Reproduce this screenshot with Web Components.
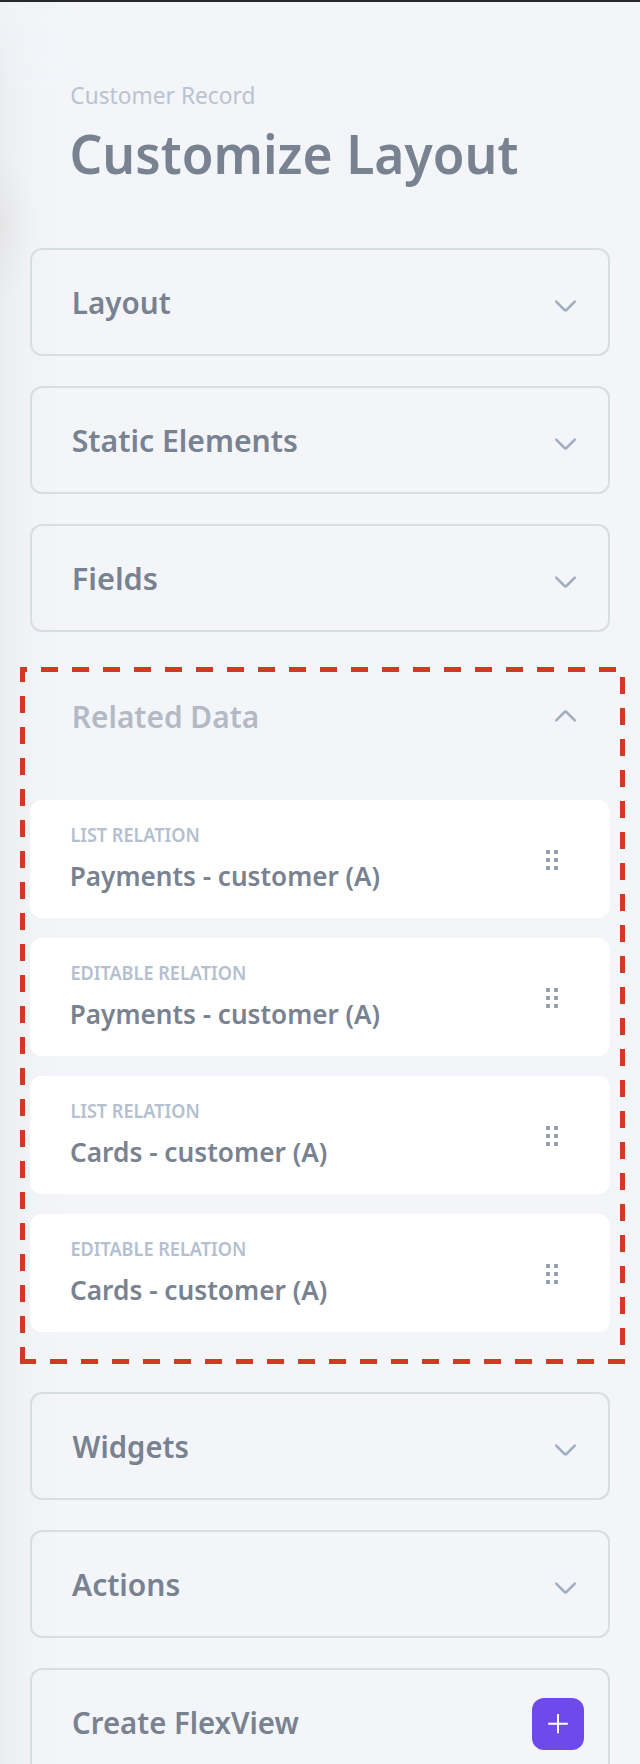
<!DOCTYPE html>
<html lang="en">
<head>
<meta charset="utf-8">
<title>Customize Layout</title>
<style>
html, body { margin: 0; height: 1764px; overflow: hidden; background: #f3f5f9; }
body { font-family: "Noto Sans", "Open Sans", sans-serif; }
</style>
</head>
<body>
<layout-panel>
  <panel-header slot="header">
    <fit-text slot="eyebrow" size="23.8" weight="400" ink="182.5" nudge=".3">Customer Record</fit-text>
    <fit-text slot="title" size="54.6" weight="600" ink="445" nudge=".3">Customize Layout</fit-text>
  </panel-header>
  <accordion-row><fit-text ink="96.5" nudge=".7">Layout</fit-text></accordion-row>
  <accordion-row><fit-text ink="224" nudge="-.3">Static Elements</fit-text></accordion-row>
  <accordion-row><fit-text ink="83" nudge=".7">Fields</fit-text></accordion-row>
  <related-group>
    <accordion-row slot="head" open><fit-text ink="183.5" nudge=".7">Related Data</fit-text></accordion-row>
    <relation-card>
      <fit-text slot="kind" size="19.6" weight="600" ink="127" nudge=".3">LIST RELATION</fit-text>
      <fit-text size="27.4" weight="600" ink="307.5" nudge=".7">Payments - customer (A)</fit-text>
    </relation-card>
    <relation-card>
      <fit-text slot="kind" size="19.6" weight="600" ink="173.5" nudge=".3">EDITABLE RELATION</fit-text>
      <fit-text size="27.4" weight="600" ink="307.5" nudge=".7">Payments - customer (A)</fit-text>
    </relation-card>
    <relation-card>
      <fit-text slot="kind" size="19.6" weight="600" ink="127" nudge=".3">LIST RELATION</fit-text>
      <fit-text size="27.4" weight="600" ink="255.5">Cards - customer (A)</fit-text>
    </relation-card>
    <relation-card>
      <fit-text slot="kind" size="19.6" weight="600" ink="173.5" nudge=".3">EDITABLE RELATION</fit-text>
      <fit-text size="27.4" weight="600" ink="255.5">Cards - customer (A)</fit-text>
    </relation-card>
  </related-group>
  <accordion-row><fit-text ink="115" nudge="-.4">Widgets</fit-text></accordion-row>
  <accordion-row><fit-text ink="107" nudge="-1">Actions</fit-text></accordion-row>
  <accordion-row action><fit-text ink="226">Create FlexView</fit-text><add-button slot="icon"></add-button></accordion-row>
</layout-panel>
<script>
const pen = document.createElement('canvas').getContext('2d');

function mount(el, html) {
  el.attachShadow({ mode: 'open' }).innerHTML = html;
}

/* A single line of text, condensed so that its ink spans a given width. */
customElements.define('fit-text', class extends HTMLElement {
  connectedCallback() {
    const size = this.getAttribute('size') || 31;
    const weight = this.getAttribute('weight') || 600;
    const nudge = Number(this.getAttribute('nudge') || 0);
    mount(this, `<style>
      :host { display: block; white-space: nowrap; font-size: ${size}px; font-weight: ${weight}; }
      span { display: inline-block; transform-origin: 0 50%; }
    </style><span><slot></slot></span>`);
    pen.font = `${weight} ${size}px "Noto Sans", "Open Sans", sans-serif`;
    const m = pen.measureText(this.textContent.trim());
    const scale = this.getAttribute('ink') / (m.actualBoundingBoxRight + m.actualBoundingBoxLeft);
    const shift = m.actualBoundingBoxLeft * scale + nudge;
    this.shadowRoot.querySelector('span').style.transform = `translateX(${shift}px) scaleX(${scale})`;
  }
});

customElements.define('layout-panel', class extends HTMLElement {
  connectedCallback() {
    mount(this, `<style>
      :host { display: block; position: relative; box-sizing: border-box; height: 1764px; overflow: hidden;
        border-top: 2px solid #282828; background: #f3f5f9; color: #788291; }
      .shade { position: absolute; inset: 0 auto 0 0; width: 68px; pointer-events: none;
        background: linear-gradient(90deg, #eaecf0 0, #edeff3 10px, #f0f2f6 27px, #f2f4f8 45px, #f3f5f9 66px);
        -webkit-mask-image: linear-gradient(180deg, rgba(0,0,0,.35), #000 90px);
        mask-image: linear-gradient(180deg, rgba(0,0,0,.35), #000 90px); }
      .glow { position: absolute; left: -36px; top: 150px; width: 72px; height: 150px; pointer-events: none;
        background: radial-gradient(closest-side, rgba(224,220,219,.5), rgba(226,224,224,.26) 45%, rgba(235,235,238,0)); }
      main { position: relative; display: flex; flex-direction: column; gap: 30px; padding: 0 30px; }
    </style><div class="shade"></div><div class="glow"></div>
    <main><slot name="header"></slot><slot></slot></main>`);
  }
});

customElements.define('panel-header', class extends HTMLElement {
  connectedCallback() {
    mount(this, `<style>
      :host { display: flex; flex-direction: column; gap: 8px; box-sizing: border-box; height: 216px; padding: 78px 0 0 41px; }
      .eyebrow { line-height: 30px; color: #bbc3cf; }
      .title { line-height: 70px; padding-left: 1px; }
    </style><div class="eyebrow"><slot name="eyebrow"></slot></div><div class="title"><slot name="title"></slot></div>`);
  }
});

customElements.define('accordion-row', class extends HTMLElement {
  connectedCallback() {
    mount(this, `<style>
      :host { display: flex; justify-content: space-between; align-items: center; box-sizing: border-box;
        height: 108px; flex: none; padding: 0 31px 0 41px; border: 2px solid #d7dee1; border-radius: 12px; line-height: 104px; }
      :host([open]) { border-color: transparent; color: #b3bac5; }
      :host([action]) { padding-right: 24px; }
      svg { display: block; width: 23px; height: 14px; margin-top: 8px; fill: none; stroke: #a1adc0; stroke-width: 2.5;
        stroke-linecap: round; stroke-linejoin: round; }
      :host([open]) svg { transform: scaleY(-1); margin-top: -1px; }
    </style><slot></slot><slot name="icon"><svg viewBox="0 0 23 14"><path d="M2.2 2.6 10.6 11Q11.5 11.8 12.4 11L20.8 2.6"/></svg></slot>`);
  }
});

customElements.define('related-group', class extends HTMLElement {
  connectedCallback() {
    mount(this, `<style>
      :host { display: block; position: relative; }
      .cards { display: flex; flex-direction: column; gap: 20px; padding: 30px 0; }
      .marker { --c: #d23921; position: absolute; left: -10px; top: 5px; width: 605px; height: 697px; pointer-events: none;
        background:
          linear-gradient(90deg, var(--c) 17px, transparent 17px) -10px 0 / 31px 5px repeat-x,
          linear-gradient(90deg, var(--c) 17px, transparent 17px) 30px 100% / 31px 5px repeat-x,
          linear-gradient(180deg, var(--c) 17px, transparent 17px) 0 29px / 5px 31px repeat-y,
          linear-gradient(180deg, var(--c) 17px, transparent 17px) 100% 10px / 5px 31px repeat-y; }
    </style><slot name="head"></slot><div class="cards"><slot></slot></div><div class="marker"></div>`);
  }
});

customElements.define('relation-card', class extends HTMLElement {
  connectedCallback() {
    mount(this, `<style>
      :host { display: flex; justify-content: space-between; align-items: center; box-sizing: border-box;
        height: 118px; padding: 0 52px 0 41px; background: #fff; border-radius: 12px; }
      .kind { line-height: 24px; color: #b4bfcf; }
      .name { line-height: 40px; margin-top: 9px; }
      .text { padding-top: 1px; }
      svg { display: block; width: 12px; height: 20px; margin-top: 2px; fill: #949cab; }
    </style><div class="text"><div class="kind"><slot name="kind"></slot></div><div class="name"><slot></slot></div></div>
    <svg viewBox="0 0 12 20"><path d="M.1 0h3.8v3.9H.1zM8.1 0h3.8v3.9H8.1zM.1 8h3.8v3.9H.1zM8.1 8h3.8v3.9H8.1zM.1 16h3.8v3.9H.1zM8.1 16h3.8v3.9H8.1z"/></svg>`);
  }
});

customElements.define('add-button', class extends HTMLElement {
  connectedCallback() {
    mount(this, `<style>
      :host { display: block; width: 52px; height: 52px; margin-top: 4px; border-radius: 12px; background: #6e4aeb; }
      svg { display: block; fill: none; stroke: #fff; stroke-width: 2; }
    </style><svg width="52" height="52" viewBox="0 0 52 52"><path d="M16.2 25.8h19.6M26 16v19.2"/></svg>`);
  }
});
</script>
</body>
</html>
